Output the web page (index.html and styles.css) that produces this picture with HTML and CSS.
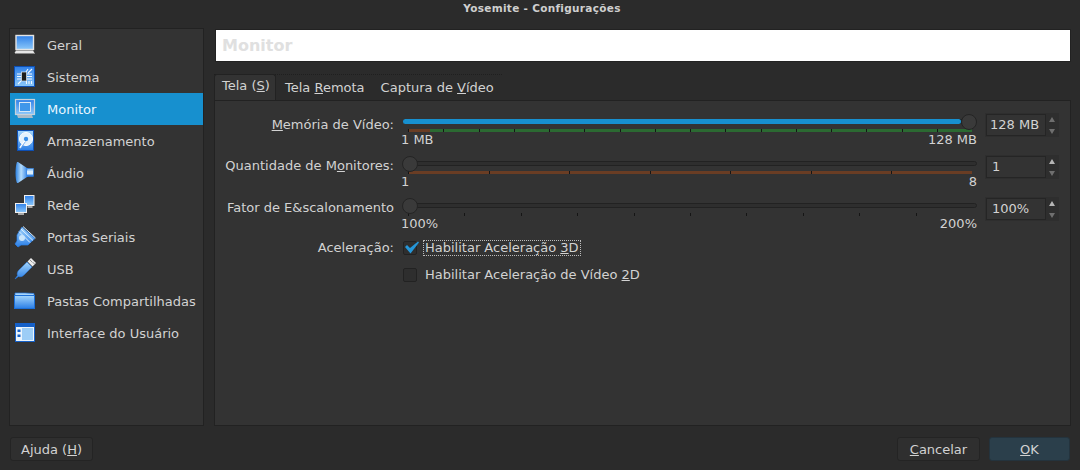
FILE: index.html
```html
<!DOCTYPE html>
<html lang="en">
<head>
  <meta charset="UTF-8" />
  <title>Yosemite - Configurações</title>
  <link rel="stylesheet" href="styles.css">
</head>
<body>
  <svg class="defs" width="0" height="0">
    <defs>
      <linearGradient id="blue" x1="0" y1="0" x2="0" y2="1">
        <stop offset="0" stop-color="#2f80e8"/>
        <stop offset="1" stop-color="#8cc8fa"/>
      </linearGradient>
      <linearGradient id="blueDown" x1="0" y1="0" x2="0" y2="1">
        <stop offset="0" stop-color="#a4d6fc"/>
        <stop offset="1" stop-color="#2a7ee6"/>
      </linearGradient>
      <linearGradient id="blueSide" x1="0" y1="0" x2="1" y2="0">
        <stop offset="0" stop-color="#2a7fe0"/>
        <stop offset="0.45" stop-color="#b4dcfb"/>
        <stop offset="1" stop-color="#2a7ee6"/>
      </linearGradient>
    </defs>
  </svg>

  <div class="titlebar">Yosemite - Configurações</div>

  <div class="main">
    <ul class="sidebar">
      <li>
        <svg class="icon" viewBox="0 0 22 22">
          <rect x="2" y="1.500" width="17.500" height="14" fill="url(#blue)" stroke="#e4e4e4" stroke-width="1.400"/>
          <path d="M2 16.500h17l1.500 2.500H.5z" fill="#e6e6e6"/>
          <path d="M1 19.500h20" stroke="#8a8a8a" stroke-width="1"/>
        </svg>
        Geral
      </li>
      <li>
        <svg class="icon" viewBox="0 0 22 22">
          <rect x=".5" y=".5" width="20" height="20" fill="url(#blue)" stroke="#0d4fb4"/>
          <path d="M3 8h5M3 10.500h5M3 13h5M13 8h5M13 10.500h5M13 13h5M14 3l-2 3M18 3l-4 4M4 18l3-3M12.500 15v3M15 15v3M17.500 15v3" stroke="#f2f8ff" stroke-width="1.100"/>
          <rect x="7.500" y="6" width="5" height="9" fill="#1c1c1c" stroke="#dfe8f0" stroke-width=".7"/>
        </svg>
        Sistema
      </li>
      <li class="selected">
        <svg class="icon" viewBox="0 0 22 22">
          <rect x="1.500" y="1.500" width="19" height="15" fill="url(#blue)" stroke="#c6d2dc" stroke-width="1.200"/>
          <rect x="5.500" y="4.500" width="11" height="9" fill="#3f97ea" stroke="#d8e8f6" stroke-width="1"/>
          <path d="M3 17h15l1 3H4z" fill="#a9bac8"/>
        </svg>
        Monitor
      </li>
      <li>
        <svg class="icon" viewBox="0 0 22 22">
          <rect x="3.500" y=".5" width="16" height="20" fill="url(#blueDown)" stroke="#0d4fb4"/>
          <circle cx="12" cy="9" r="6.500" fill="#e4f2fd" stroke="#fff"/>
          <circle cx="12" cy="9" r="2.200" fill="#3a8fe8"/>
          <path d="M11 11l-5 7" stroke="#fff" stroke-width="1.800"/>
          <path d="M11.500 11.500l-5 7" stroke="#2a7ee6" stroke-width=".6"/>
        </svg>
        Armazenamento
      </li>
      <li>
        <svg class="icon" viewBox="0 0 22 22">
          <path d="M4 0l9 6h1v9h-1l-9 6H3c-1-2-1.500-6-1.500-10S2 2 3 0z" fill="url(#blueSide)"/>
          <rect x="13" y="6.500" width="6.500" height="8" fill="url(#blueDown)" stroke="#2a7ee6" stroke-width=".6"/>
          <rect x="13" y="8.500" width="6" height="4" fill="#dceefc"/>
        </svg>
        Áudio
      </li>
      <li>
        <svg class="icon" viewBox="0 0 22 22">
          <rect x="10.500" y="1.500" width="9.500" height="10" fill="url(#blue)" stroke="#f0f0f0"/>
          <rect x="1.500" y="9.500" width="11" height="9" fill="url(#blue)" stroke="#f0f0f0"/>
          <path d="M4 20h6" stroke="#ddd" stroke-width="1.400"/>
          <path d="M13.500 13h5" stroke="#ddd" stroke-width="1.400"/>
        </svg>
        Rede
      </li>
      <li>
        <svg class="icon" viewBox="0 0 22 22">
          <path d="M8 1l13 11.500-4 3.500-3 3H7l-3 2-3-3 2-3V9z" fill="url(#blueDown)" stroke="#2a7ee6" stroke-width=".7"/>
          <path d="M9 .5l12.500 11.500M7 3l12 11.500M5 5.500l11 11" stroke="#dff0fd" stroke-width="1"/>
          <circle cx="8" cy="12" r="3" fill="#c9e5fb"/>
        </svg>
        Portas Seriais
      </li>
      <li>
        <svg class="icon" viewBox="0 0 22 22">
          <path d="M13 4l5 5-8 8c-2 2-4 2-5.500 1.500L1 21l2.500-3.500C3 16 3 14 5 12z" fill="url(#blueDown)" stroke="#2a7ee6" stroke-width=".5"/>
          <path d="M13.500 3.500L17 0l5 5-3.500 3.500z" fill="#ececec"/>
          <path d="M16.500 2.500l1 1M19 4.500l1 1" stroke="#333" stroke-width="1"/>
        </svg>
        USB
      </li>
      <li>
        <svg class="icon" viewBox="0 0 22 22">
          <path d="M1 6V3h10l9 .5V6z" fill="#a8d6fb" stroke="#2a7ee6" stroke-width=".7"/>
          <rect x=".5" y="5.500" width="20" height="13" fill="url(#blueDown)" stroke="#1c6fd8"/>
        </svg>
        Pastas Compartilhadas
      </li>
      <li>
        <svg class="icon" viewBox="0 0 22 22">
          <rect x="1" y="1" width="20" height="19" fill="#1560c8"/>
          <rect x="2" y="5" width="18" height="14" fill="#eaf4fc"/>
          <rect x="8" y="6" width="11" height="12" fill="#9ccdf6"/>
          <path d="M3.500 7.500h3v2.500h-3zM3.500 12.500h3V15h-3z" fill="#1560c8"/>
        </svg>
        Interface do Usuário
      </li>
    </ul>

    <div class="content">
      <div class="page-title">Monitor</div>

      <div class="tabs">
        <div class="tab active">Tela (<u>S</u>)</div>
        <div class="tab">Tela <u>R</u>emota</div>
        <div class="tab">Captura de <u>V</u>ídeo</div>
      </div>

      <div class="pane">
        <div class="form-row">
          <label class="form-label"><u>M</u>emória de Vídeo:</label>
          <div class="slider">
            <div class="track"><div class="fill"></div><div class="knob knob-end"></div></div>
            <div class="scale scale-memory"></div>
            <div class="range"><span>1 MB</span><span>128 MB</span></div>
          </div>
          <div class="spin">
            <div class="spin-field">128 MB</div>
            <div class="spin-arrows"><span class="up off"></span><span class="down off"></span></div>
          </div>
        </div>

        <div class="form-row">
          <label class="form-label tight">Quantidade de M<u>o</u>nitores:</label>
          <div class="slider">
            <div class="track"><div class="knob"></div></div>
            <div class="scale scale-monitors"></div>
            <div class="range"><span>1</span><span>8</span></div>
          </div>
          <div class="spin">
            <div class="spin-field indent">1</div>
            <div class="spin-arrows"><span class="up"></span><span class="down off"></span></div>
          </div>
        </div>

        <div class="form-row">
          <label class="form-label tight">Fator de E&amp;scalonamento</label>
          <div class="slider">
            <div class="track"><div class="knob"></div></div>
            <div class="scale scale-factor"></div>
            <div class="range"><span>100%</span><span>200%</span></div>
          </div>
          <div class="spin">
            <div class="spin-field indent">100%</div>
            <div class="spin-arrows"><span class="up"></span><span class="down off"></span></div>
          </div>
        </div>

        <div class="check-row first">
          <label class="form-label">Aceleração:</label>
          <div class="check">
            <span class="box">
              <svg viewBox="0 0 16 16" width="16" height="16"><path d="M1 8l2-2 3 3 8-6.500 1 1L6.500 14.500z" fill="#2596d8"/></svg>
            </span>
            <span class="check-text focused">Habilitar Aceleração <u>3</u>D</span>
          </div>
        </div>
        <div class="check-row">
          <span></span>
          <div class="check">
            <span class="box"></span>
            <span class="check-text">Habilitar Aceleração de Vídeo <u>2</u>D</span>
          </div>
        </div>
      </div>
    </div>
  </div>

  <div class="footer">
    <button class="btn">Ajuda (<u>H</u>)</button>
    <div class="footer-right">
      <button class="btn"><u>C</u>ancelar</button>
      <button class="btn primary"><u>O</u>K</button>
    </div>
  </div>
</body>
</html>
```

FILE: styles.css
```css
* {
  box-sizing: border-box;
}
html, body {
  margin: 0;
  height: 470px;
  overflow: hidden;
}
body {
  display: flex;
  flex-direction: column;
  background: #2b2b2b;
  color: #d2d2d2;
  font-family: "DejaVu Sans", sans-serif;
  font-size: 13px;
}
.defs {
  display: block;
  height: 0;
}
.titlebar {
  height: 16px;
  padding-left: 4px;
  line-height: 16px;
  text-align: center;
  font-size: 10.5px;
  font-weight: bold;
  color: #cfcfcf;
  letter-spacing: 0.3px;
}
.main {
  display: flex;
  gap: 10px;
  height: 410px;
  padding: 12px 9px 0 9px;
}
.sidebar {
  width: 195px;
  height: 398px;
  margin: 0;
  padding: 0;
  list-style: none;
  background: #333;
  border: 1px solid #222;
}
.sidebar li {
  display: flex;
  align-items: center;
  gap: 11px;
  height: 32px;
  padding-left: 4px;
}
.sidebar li.selected {
  background: #1790cf;
  color: #e8f6ff;
}
.icon {
  width: 22px;
  height: 22px;
  flex: none;
}
.content {
  flex: 1;
  display: flex;
  flex-direction: column;
  min-width: 0;
}
.page-title {
  height: 33px;
  margin: 1px 0 0 1px;
  padding-left: 6px;
  line-height: 31px;
  background: #fff;
  border: 1px solid #222;
  font-size: 16px;
  font-weight: bold;
  color: #e0e0e0;
}
.tabs {
  display: flex;
  height: 26px;
  margin-top: 12px;
  width: 288px;
  border-top: 1px dotted #1f1f1f;
}
.tab {
  padding: 5px 8px 0 8px;
  height: 26px;
  background: #2b2b2b;
  white-space: nowrap;
}
.tab.active {
  width: 62px;
  padding: 3px 0 0 7px;
  margin-top: -1px;
  margin-right: 1px;
  height: 27px;
  background: #333;
  border: 1px solid #222;
  border-bottom: none;
  border-radius: 3px 3px 0 0;
}
.pane {
  height: 326px;
  padding-top: 10px;
  background: #333;
  border: 1px solid #222;
}
.form-row {
  display: grid;
  grid-template-columns: 179px 576px 75px;
  column-gap: 7px;
  height: 42px;
}
.form-label {
  padding-top: 6px;
  line-height: 16px;
  text-align: right;
  white-space: nowrap;
}
.form-label.tight {
  padding-top: 5px;
}
.slider {
  display: flex;
  flex-direction: column;
}
.track {
  position: relative;
  height: 5px;
  margin: 8px 0 3px 2px;
  background: #2e2e2e;
  border: 1px solid #222;
  border-radius: 3px;
}
.fill {
  height: 5px;
  margin: -1px 15px 0 -1px;
  background: #1790cf;
  border-radius: 3px;
}
.knob {
  position: absolute;
  top: -6px;
  left: -2px;
  width: 16px;
  height: 16px;
  background: #3a3a3a;
  border: 1px solid #242424;
  border-radius: 50%;
}
.knob-end {
  left: auto;
  right: -1px;
}
.scale {
  height: 3px;
  margin: 2px 5px 0 7px;
}
.scale-memory {
  background:
    repeating-linear-gradient(to right, #151515 0 1px, transparent 1px 35.25px),
    linear-gradient(to right, #6a3d24 22px, #2b6a32 22px);
}
.scale-monitors {
  background:
    repeating-linear-gradient(to right, #151515 0 1px, transparent 1px 80.570px),
    #6a3d24;
}
.scale-factor {
  background: repeating-linear-gradient(to right, #151515 0 1px, transparent 1px 56.400px);
}
.range {
  display: flex;
  justify-content: space-between;
  height: 16px;
  line-height: 16px;
}
.spin {
  display: flex;
  align-items: center;
  height: 24px;
  margin-top: 2px;
  margin-left: 1px;
  padding: 1px 2px 1px 1px;
  background: #2e2e2e;
}
.spin-field {
  width: 60px;
  flex: none;
  height: 22px;
  line-height: 20px;
  padding-left: 3px;
  background: #333;
  border: 1px solid #252525;
}
.spin-field.indent {
  padding-left: 5px;
}
.spin-arrows {
  display: flex;
  flex-direction: column;
  gap: 7px;
  align-items: center;
  flex: 1;
}
.up, .down {
  width: 0;
  height: 0;
  border-left: 3.5px solid transparent;
  border-right: 3.5px solid transparent;
}
.up {
  border-bottom: 5px solid #b5b5b5;
}
.down {
  border-top: 5px solid #b5b5b5;
}
.up.off {
  border-bottom-color: #6f6f6f;
}
.down.off {
  border-top-color: #6f6f6f;
}
.check-row {
  display: grid;
  grid-template-columns: 179px 1fr;
  column-gap: 7px;
  height: 27px;
}
.check-row.first {
  margin-top: 3px;
}
.check-row .form-label {
  padding-top: 0;
}
.check {
  display: flex;
  align-items: flex-start;
  height: 16px;
}
.box {
  position: relative;
  width: 14px;
  height: 14px;
  margin: 1px 6px 0 2px;
  background: #2e2e2e;
  border: 1px solid #222;
  border-radius: 2px;
}
.box svg {
  position: absolute;
  top: -3px;
  left: 0;
}
.check-text {
  padding: 0 1px;
  line-height: 14px;
  border: 1px dotted transparent;
}
.check-text.focused {
  border-color: #bbb;
}
.footer {
  display: flex;
  justify-content: space-between;
  padding: 11px 10px 0 10px;
}
.footer-right {
  display: flex;
  gap: 9px;
}
.btn {
  width: 83px;
  height: 24px;
  padding: 0;
  background: #2f2f2f;
  border: 1px solid #242424;
  border-radius: 3px;
  color: #d2d2d2;
  font-family: inherit;
  font-size: 13px;
}
.btn.primary {
  width: 81px;
  background: #2b3f4b;
  border-color: #24333d;
}
```
